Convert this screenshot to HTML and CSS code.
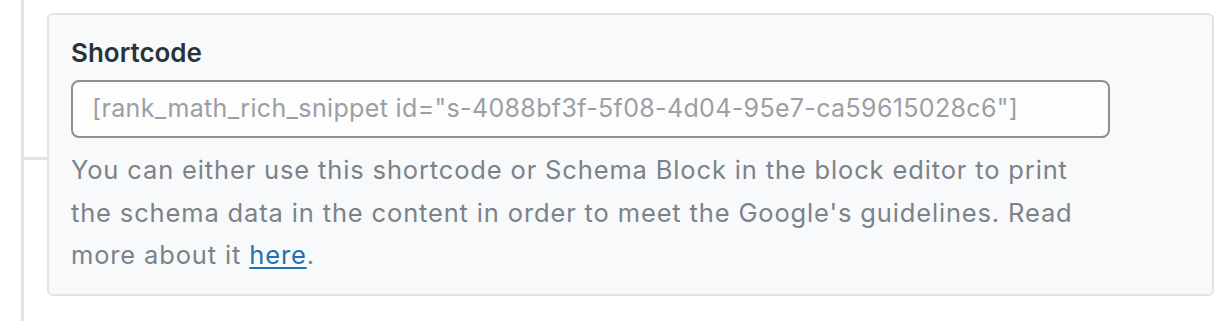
FILE: index.html
```html
<!DOCTYPE html>
<html lang="en">
<head>
<meta charset="utf-8">
<title>Shortcode</title>
<link rel="stylesheet" href="styles.css">
</head>
<body>
<div class="tree">
  <div class="rail"></div>
  <div class="branch"></div>
  <section class="card">
    <label class="field-label" for="shortcode">Shortcode</label>
    <input id="shortcode" class="shortcode-input" type="text" readonly value="[rank_math_rich_snippet id=&quot;s-4088bf3f-5f08-4d04-95e7-ca59615028c6&quot;]">
    <p class="description">You can either use this shortcode or Schema Block in the block editor to print the schema data in the content in order to meet the Google's guidelines. Read more about it <a href="#" class="link">here</a>.</p>
  </section>
</div>
</body>
</html>
```

FILE: styles.css
```css
* { box-sizing: border-box; }

html, body {
  margin: 0;
  padding: 0;
  background: #ffffff;
}

body {
  font-family: Inter, "Liberation Sans", Arial, sans-serif;
  width: 1229px;
  height: 321px;
  overflow: hidden;
}

.tree {
  display: flex;
  align-items: flex-start;
  padding-left: 21px;
  height: 321px;
}

.rail {
  width: 3px;
  align-self: stretch;
  background: #dfe3e6;
}

.branch {
  width: 23px;
  height: 3px;
  margin-top: 157px;
  background: #dfe3e6;
}

.card {
  margin-top: 13px;
  width: 1167px;
  height: 283px;
  background: #f7f9fa;
  border: 2px solid #e1e4e7;
  border-radius: 6px;
  padding: 23px 22px 0 22px;
}

.field-label {
  display: block;
  font-family: Inter, "Liberation Sans", Arial, sans-serif;
  font-size: 26px;
  font-weight: 600;
  line-height: 29px;
  color: #2c3338;
}

.shortcode-input {
  display: block;
  margin-top: 13px;
  width: 1039px;
  height: 58px;
  padding: 0 0 2px 19px;
  border: 2px solid #8c8f94;
  border-radius: 8px;
  background: #fdfdfd;
  font-family: Inter, "Liberation Sans", Arial, sans-serif;
  font-size: 25px;
  letter-spacing: 0.35px;
  color: #9b9fa4;
  outline: none;
}

.description {
  margin: 11px 0 0 0;
  width: 1040px;
  font-size: 25.5px;
  line-height: 42.5px;
  letter-spacing: 0.85px;
  color: #7c8288;
}

.link {
  color: #2271b1;
  text-decoration: underline;
  text-underline-offset: 3px;
}
```
